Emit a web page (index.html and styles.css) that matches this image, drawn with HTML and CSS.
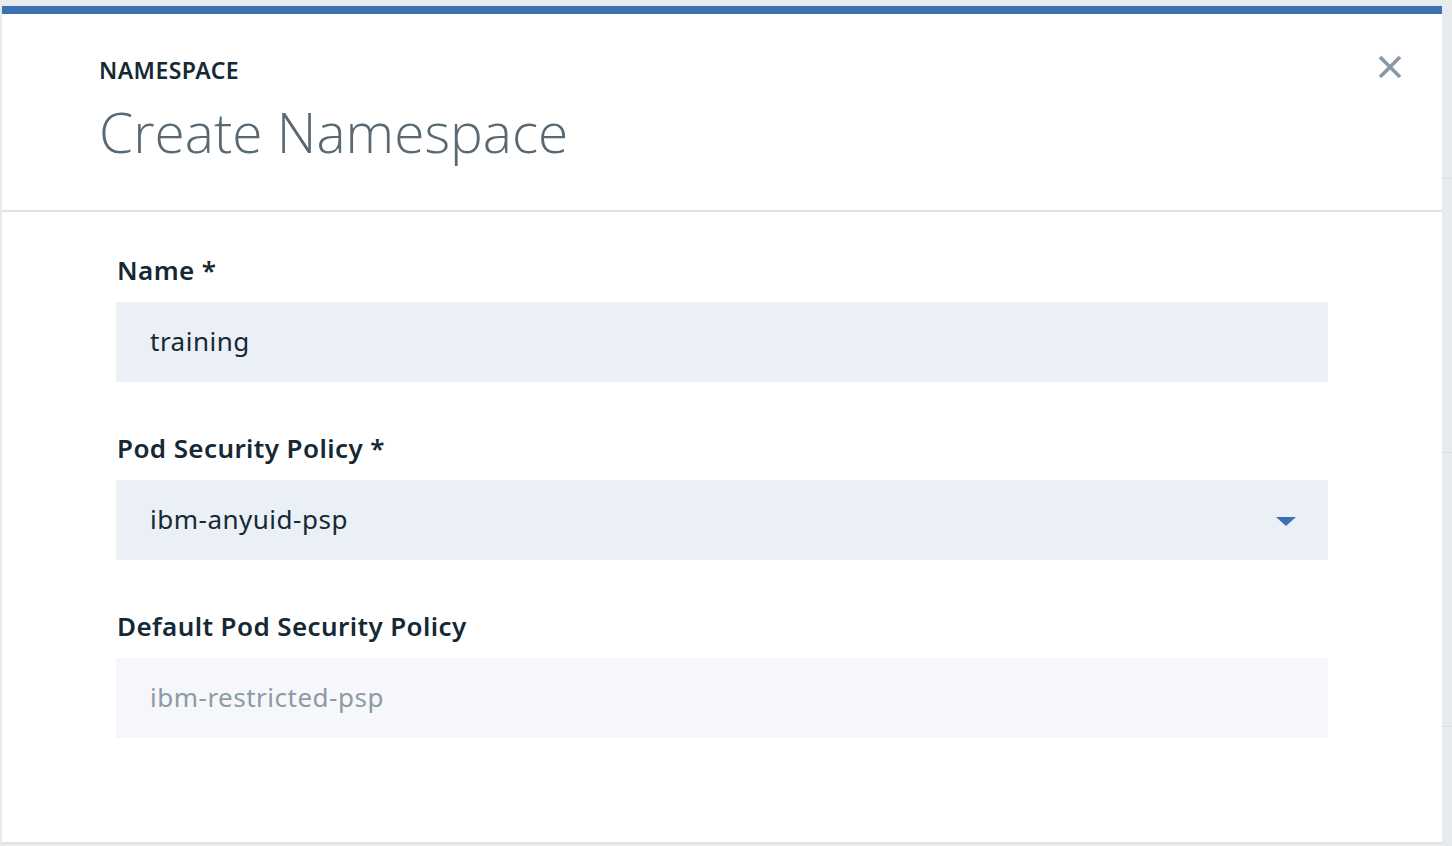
FILE: index.html
```html
<!DOCTYPE html>
<html lang="en">
<head>
<meta charset="utf-8">
<title>Create Namespace</title>
<link rel="stylesheet" href="styles.css">
</head>
<body>
<div class="modal">
  <header class="modal-header">
    <div class="titles">
      <p class="eyebrow">NAMESPACE</p>
      <h1 class="heading">Create Namespace</h1>
    </div>
    <button class="close" aria-label="Close">
      <svg width="24" height="24" viewBox="0 0 24 24"><path d="M2 2 L22 22 M22 2 L2 22" stroke="#8a98a3" stroke-width="3.6" stroke-linecap="butt"/></svg>
    </button>
  </header>
  <form class="modal-body">
    <div class="field">
      <label class="label">Name *</label>
      <div class="input">training</div>
    </div>
    <div class="field">
      <label class="label">Pod Security Policy *</label>
      <div class="input select">ibm-anyuid-psp
        <svg class="caret" width="20" height="9" viewBox="0 0 20 9"><path d="M0 0 H20 L10 9 Z" fill="#3d70b2"/></svg>
      </div>
    </div>
    <div class="field">
      <label class="label">Default Pod Security Policy</label>
      <div class="input disabled">ibm-restricted-psp</div>
    </div>
  </form>
</div>
</body>
</html>
```
FILE: styles.css
```css
html, body {
  margin: 0;
  padding: 0;
}
body {
  width: 1452px;
  height: 846px;
  overflow: hidden;
  background-color: #e8ebee;
  background-image: repeating-linear-gradient(to bottom, transparent 0, transparent 178px, #dadfe3 178px, #dadfe3 179px, transparent 179px, transparent 274px);
  font-family: "Noto Sans", "Open Sans", sans-serif;
  color: #152935;
  padding: 6px 10px 0 2px;
  box-sizing: border-box;
}
.modal {
  width: 1440px;
  height: 836px;
  background: #fff;
  border-top: 8px solid #3d70b2;
  box-shadow: 0 2px 0 #dfe3e6;
  box-sizing: border-box;
  display: flex;
  flex-direction: column;
}
.modal-header {
  height: 198px;
  border-bottom: 2px solid #dfe3e6;
  box-sizing: border-box;
  display: flex;
  justify-content: space-between;
  padding: 0 39px 0 97px;
}
.titles {
  padding-top: 40px;
}
.eyebrow {
  margin: 0;
  font-size: 23px;
  font-weight: 600;
  line-height: 32px;
  letter-spacing: 0.45px;
  color: #152935;
}
.heading {
  margin: 14px 0 0;
  font-family: "Open Sans", sans-serif;
  font-weight: 300;
  font-size: 55px;
  line-height: 64px;
  color: #5a6872;
}
.close {
  margin-top: 40px;
  width: 26px;
  height: 26px;
  padding: 0;
  border: 0;
  background: none;
  display: flex;
  align-items: center;
  justify-content: center;
}
.modal-body {
  padding: 42px 114px 0;
  display: flex;
  flex-direction: column;
  gap: 50px;
}
.field {
  display: flex;
  flex-direction: column;
}
.label {
  font-size: 26px;
  font-weight: 600;
  line-height: 32px;
  letter-spacing: 0.4px;
  margin-bottom: 16px;
  color: #152935;
  padding-left: 1px;
}
.input {
  height: 80px;
  box-sizing: border-box;
  background: #ebf0f7;
  padding: 0 34px 2px;
  display: flex;
  align-items: center;
  justify-content: space-between;
  font-size: 26px;
  letter-spacing: 0.5px;
  color: #152935;
}
.input.disabled {
  background: #f5f7fa;
  color: #8c9ba5;
}
.caret {
  margin-right: -2px;
  margin-top: 4px;
}
```
